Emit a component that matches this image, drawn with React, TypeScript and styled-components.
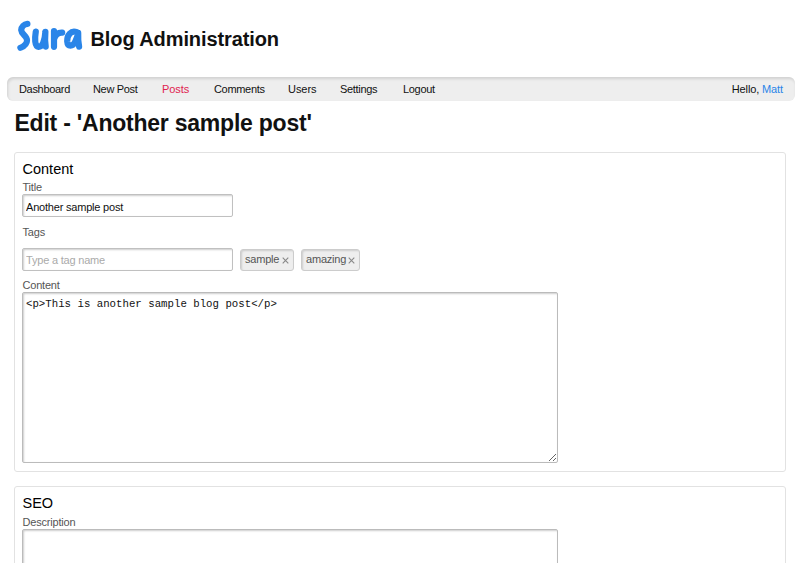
import React from 'react';
import styled, { createGlobalStyle } from 'styled-components';

const GlobalStyle = createGlobalStyle`
  * { box-sizing: border-box; }
  html, body { margin: 0; padding: 0; overflow: hidden; }
  body {
    background: #fff;
    color: #111;
    font-family: "Liberation Sans", Arial, sans-serif;
    font-size: 11px;
    letter-spacing: -0.2px;
  }
`;

const Page = styled.div`
  width: 800px;
  height: 563px;
  overflow: hidden;
`;

const Header = styled.header`
  display: flex;
  height: 77px;
  padding: 17px 0 0 15px;
`;

const Logo = styled.svg`
  display: block;
  width: 70px;
  height: 40px;
  flex: none;
`;

const SiteTitle = styled.h1`
  margin: 9px 0 0 5.5px;
  font-size: 20px;
  line-height: 26px;
  letter-spacing: -0.1px;
  white-space: nowrap;
`;

const Nav = styled.nav`
  display: flex;
  align-items: center;
  gap: 24px;
  width: 788px;
  height: 24px;
  margin-left: 7px;
  padding: 0 12px;
  background: #eee;
  border-radius: 6px;
  box-shadow: inset 1px 2px 3px rgba(0, 0, 0, 0.12);
`;

const NavLink = styled.a<{ $w: number; $active?: boolean }>`
  width: ${p => p.$w}px;
  white-space: nowrap;
  letter-spacing: ${p => (p.$w < 30 ? '-0.05px' : '-0.32px')};
  color: ${p => (p.$active ? '#e0234e' : '#111')};
`;

const Greeting = styled.span`
  margin-left: auto;
  white-space: nowrap;
  letter-spacing: -0.12px;
`;

const UserLink = styled.a`
  color: #2a85e8;
`;

const PageTitle = styled.h2`
  margin: 8px 0 14px 14.5px;
  font-size: 23px;
  line-height: 29px;
  letter-spacing: -0.23px;
  white-space: nowrap;
`;

const Panel = styled.section<{ $h: number }>`
  width: 772px;
  height: ${p => p.$h}px;
  margin: 0 0 14px 14px;
  padding: 7px 7px 0;
  border: 1px solid #e2e2e2;
  border-radius: 3px;
`;

const Legend = styled.h3`
  margin: 0;
  padding-left: 0.5px;
  font-size: 14.5px;
  font-weight: 400;
  line-height: 18px;
  letter-spacing: 0;
  color: #000;
`;

const Label = styled.label<{ $top: number; $h: number }>`
  display: block;
  margin-top: ${p => p.$top}px;
  height: ${p => p.$h}px;
  padding-left: 0.5px;
  line-height: 14px;
  color: #555;
`;

const Field = styled.input`
  display: block;
  width: 211px;
  height: 23px;
  margin: 0;
  padding: 3px 3px 1px;
  border: 1px solid #c0c0c0;
  border-radius: 2px;
  background: #fff;
  box-shadow: inset 1px 1px 2px rgba(0, 0, 0, 0.2);
  color: #111;
  font: 11px "Liberation Sans", Arial, sans-serif;
  letter-spacing: inherit;
  outline: none;
  &::placeholder { color: #aaa; opacity: 1; }
`;

const TagField = styled(Field)`
  padding: 1px 3px;
`;

const TagRow = styled.div`
  display: flex;
  gap: 7px;
`;

const Tag = styled.span<{ $w: number }>`
  display: flex;
  align-items: center;
  justify-content: space-between;
  width: ${p => p.$w}px;
  height: 22px;
  margin-top: 0.5px;
  padding: 0 4px 2px;
  border: 1px solid #ccc;
  border-radius: 3px;
  background: #eee;
  box-shadow: inset 1px 1px 2px rgba(0, 0, 0, 0.14);
  color: #555;
`;

const RemoveIcon = styled.svg`
  width: 7px;
  height: 7px;
  margin-top: 3px;
  flex: none;
`;

const Editor = styled.textarea<{ $h: number }>`
  display: block;
  width: 536px;
  height: ${p => p.$h}px;
  margin: 0;
  padding: 4px 3px;
  border: 1px solid #bbb;
  border-radius: 2px;
  box-shadow: inset 1px 1px 2px rgba(0, 0, 0, 0.2);
  color: #111;
  font: 10.73px/14px "Liberation Mono", monospace;
  letter-spacing: 0;
  outline: none;
  resize: both;
`;

const links = [
  { label: 'Dashboard', w: 50 },
  { label: 'New Post', w: 45 },
  { label: 'Posts', w: 28, active: true },
  { label: 'Comments', w: 50 },
  { label: 'Users', w: 28 },
  { label: 'Settings', w: 39 },
  { label: 'Logout', w: 32 },
];

function RemovableTag({ name, width }: { name: string; width: number }) {
  return (
    <Tag $w={width}>
      {name}
      <RemoveIcon viewBox="0 0 7 7">
        <path d="M0.7 0.7 6.3 6.3M6.3 0.7 0.7 6.3" stroke="#888" strokeWidth="1.1" fill="none" />
      </RemoveIcon>
    </Tag>
  );
}

export default function App() {
  return (
    <Page>
      <GlobalStyle />
      <Header>
        <Logo viewBox="0 0 70 40" role="img" aria-label="Sura">
          <g fill="none" stroke="#2a85e8" strokeWidth="6.2" strokeLinecap="round" strokeLinejoin="round">
            <path d="M12.4 6.8C9 7.2 6.4 10 6.2 13.2C6.4 17.4 12.2 18.8 12 23.4C12 27.8 8.4 29.4 5.4 30.8" />
            <path d="M20.8 14.6C19.8 21 19.4 29.4 23.6 29.8C27.4 29.8 29.8 24 30.4 14.8C29.9 21 30.1 26 30.7 29.6" />
            <path d="M39 14.2V29.8M39.4 21.4C40.6 17.2 43.4 15.4 47.2 15.6" />
            <path d="M61.8 15.2C56 12.8 52 18.6 52.2 24.2C52.6 30.2 57.8 30 60.4 24.2C62 20.6 62.8 18.2 63.2 15.8C63 21.2 63.4 26 64.1 29.7" />
          </g>
        </Logo>
        <SiteTitle>Blog Administration</SiteTitle>
      </Header>
      <Nav>
        {links.map(l => (
          <NavLink key={l.label} $w={l.w} $active={l.active}>{l.label}</NavLink>
        ))}
        <Greeting>Hello, <UserLink>Matt</UserLink></Greeting>
      </Nav>
      <PageTitle>Edit - 'Another sample post'</PageTitle>
      <Panel $h={320}>
        <Legend>Content</Legend>
        <Label $top={2} $h={14}>Title</Label>
        <Field defaultValue="Another sample post" />
        <Label $top={8} $h={23}>Tags</Label>
        <TagRow>
          <TagField placeholder="Type a tag name" />
          <RemovableTag name="sample" width={54} />
          <RemovableTag name="amazing" width={59} />
        </TagRow>
        <Label $top={7} $h={14}>Content</Label>
        <Editor $h={171} spellCheck={false} defaultValue="<p>This is another sample blog post</p>" />
      </Panel>
      <Panel $h={320}>
        <Legend>SEO</Legend>
        <Label $top={3} $h={14}>Description</Label>
        <Editor $h={171} />
      </Panel>
    </Page>
  );
}
